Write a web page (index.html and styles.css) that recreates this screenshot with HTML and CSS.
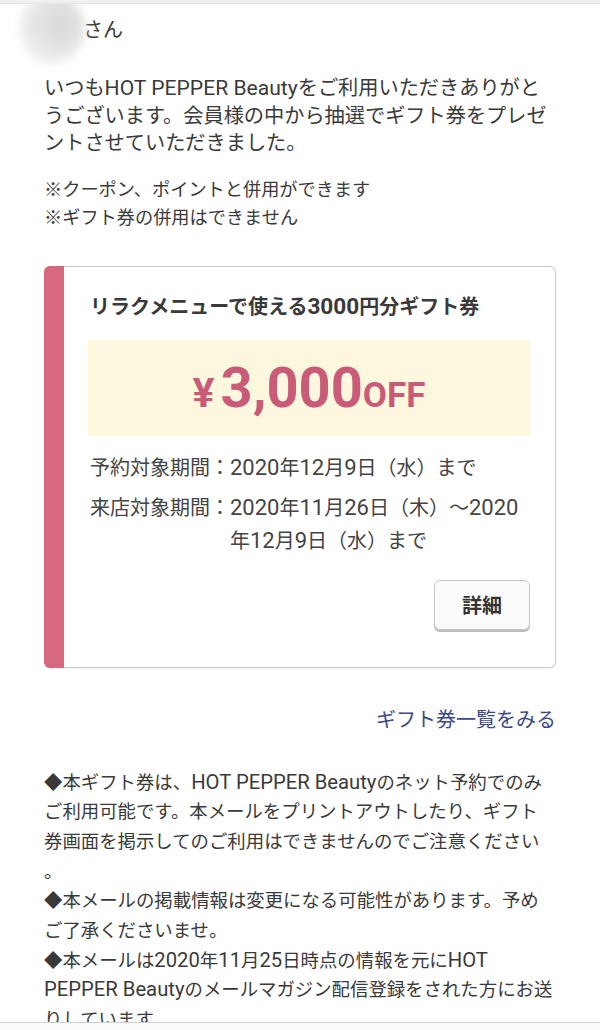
FILE: index.html
```html
<!DOCTYPE html>
<html lang="ja">
<head>
<meta charset="utf-8">
<title>ギフト券のお知らせ</title>
<link rel="stylesheet" href="styles.css">
</head>
<body>
<div class="screen">
  <div class="topbar"></div>
  <main class="mail">
    <p class="greeting"><span class="name" aria-hidden="true"></span>さん</p>
    <p class="intro">いつも<span class="lt">HOT PEPPER Beauty</span>をご利用いただきありがとうございます。会員様の中から抽選でギフト券をプレゼントさせていただきました。</p>
    <p class="notes">※クーポン、ポイントと併用ができます<br>※ギフト券の併用はできません</p>

    <section class="card">
      <div class="card-bar"></div>
      <div class="card-body">
        <h2 class="card-title">リラクメニューで使える<span class="lt">3000</span>円分ギフト券</h2>
        <div class="amount-box">
          <span class="yen">¥</span><span class="amount">3,000</span><span class="off">OFF</span>
        </div>
        <dl class="periods">
          <dt>予約対象期間：</dt>
          <dd><span class="lt">2020</span>年<span class="lt">12</span>月<span class="lt">9</span>日（水）まで</dd>
          <dt>来店対象期間：</dt>
          <dd><span class="lt">2020</span>年<span class="lt">11</span>月<span class="lt">26</span>日（木）～<span class="lt">2020</span>年<span class="lt">12</span>月<span class="lt">9</span>日（水）まで</dd>
        </dl>
        <div class="actions">
          <button class="detail-btn" type="button">詳細</button>
        </div>
      </div>
    </section>

    <p class="list-link"><a href="#">ギフト券一覧をみる</a></p>

    <p class="terms">◆本ギフト券は、<span class="lt">HOT PEPPER Beauty</span>のネット予約でのみご利用可能です。本メールをプリントアウトしたり、ギフト券画面を掲示してのご利用はできませんのでご注意ください<br>。<br>◆本メールの掲載情報は変更になる可能性があります。予めご了承くださいませ。<br>◆本メールは<span class="lt">2020</span>年<span class="lt">11</span>月<span class="lt">25</span>日時点の情報を元に<span class="lt">HOT PEPPER Beauty</span>のメールマガジン配信登録をされた方にお送りしています。</p>
  </main>
  <div class="bottombar"></div>
</div>
</body>
</html>
```
FILE: styles.css
```css
* { box-sizing: border-box; }

html, body {
  margin: 0;
  padding: 0;
  background: #ffffff;
}

body {
  font-family: Roboto, "Noto Sans CJK JP", sans-serif;
  color: #3a3a3a;
}

.screen {
  width: 600px;
  height: 1030px;
  display: flex;
  flex-direction: column;
  overflow: hidden;
}

.topbar {
  height: 4px;
  flex: none;
  background: #f0f0f0;
  border-bottom: 1px solid #e4e4e4;
}

.mail {
  flex: 1;
  overflow: hidden;
  padding: 0 44px;
}

.bottombar {
  height: 8px;
  flex: none;
  border-top: 1px solid #cfcfcf;
  background: #fbfbfb;
}

p { margin: 0; }

/* Latin runs are set a little larger, as the device font renders them */
.lt { font-size: 1.1em; line-height: 1; }
.intro .lt { font-size: 1.045em; }
.card-title .lt { font-size: 1.13em; }

.greeting {
  margin-top: 12px;
  font-size: 20px;
  line-height: 28px;
}

.name {
  display: inline-block;
  width: 39px;
  height: 20px;
  position: relative;
  vertical-align: middle;
}

.name::before {
  content: "";
  position: absolute;
  left: -25px;
  top: -30px;
  width: 66px;
  height: 72px;
  border-radius: 50%;
  background: radial-gradient(circle at 62% 45%, #d8d8d8 0%, #e2e2e2 35%, #eeeeee 65%, rgba(255,255,255,0) 100%);
  filter: blur(4px);
}

.intro {
  margin-top: 31px;
  font-size: 20.2px;
  line-height: 27.5px;
}

.notes {
  margin-top: 18px;
  font-size: 18.2px;
  line-height: 28px;
}

.card {
  margin-top: 34px;
  display: flex;
  border: 1px solid #cbcbcb;
  border-left: none;
  border-radius: 6px;
  box-shadow: 0 1px 2px rgba(0,0,0,0.06);
}

.card-bar {
  width: 20px;
  flex: none;
  margin: -1px 0;
  background: #d6697f;
  border-radius: 6px 0 0 6px;
}

.card-body {
  flex: 1;
  padding: 26px 25px 37px 24px;
}

.card-title {
  margin: 0 0 0 2px;
  font-size: 20px;
  line-height: 28px;
  font-weight: 700;
  color: #3a3a3a;
}

.amount-box {
  margin-top: 19px;
  height: 96px;
  background: #fbf8dd;
  display: flex;
  align-items: baseline;
  justify-content: center;
  padding-top: 20px;
  color: #c95a78;
  font-weight: 700;
}

.yen {
  font-size: 41px;
  line-height: 56px;
  margin-right: 6px;
}

.amount {
  font-size: 56px;
  line-height: 56px;
}

.off {
  font-size: 35px;
  line-height: 56px;
}

.periods {
  margin: 16px 0 0 2px;
  display: grid;
  grid-template-columns: auto 1fr;
  row-gap: 7px;
  font-size: 20px;
  line-height: 33px;
  color: #444444;
}

.periods dt, .periods dd { margin: 0; }

.actions {
  margin-top: 22px;
  display: flex;
  justify-content: flex-end;
}

.detail-btn {
  width: 96px;
  height: 50px;
  border: 1px solid #c6c6c6;
  border-radius: 6px;
  background: #fbfbfb;
  box-shadow: 0 2px 0 #bdbdbd;
  font-family: Roboto, "Noto Sans CJK JP", sans-serif;
  font-size: 20px;
  font-weight: 700;
  color: #333333;
  padding: 0;
}

.list-link {
  margin-top: 38px;
  text-align: right;
  font-size: 20px;
  line-height: 28px;
}

.list-link a {
  color: #3d4a85;
  text-decoration: none;
}

.terms {
  margin-top: 34px;
  font-size: 18.4px;
  line-height: 29.7px;
  color: #3a3a3a;
}
```
